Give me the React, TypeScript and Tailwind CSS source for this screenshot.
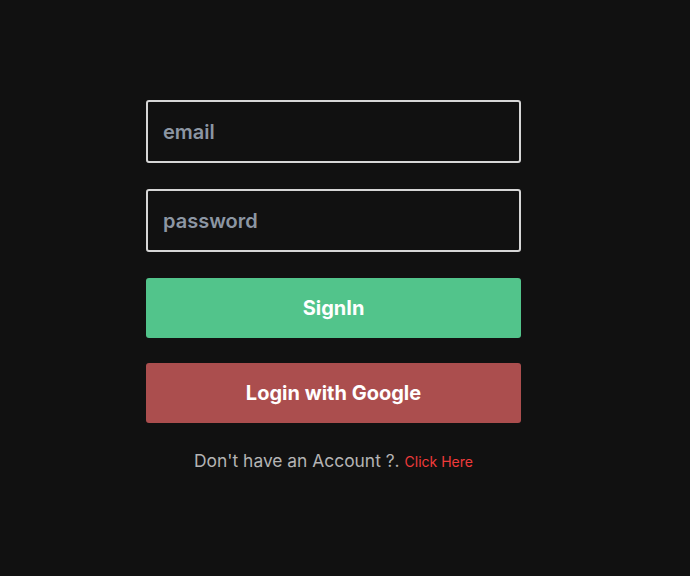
import React, { useState } from 'react';

const App: React.FC = () => {
  const [email, setEmail] = useState('');
  const [password, setPassword] = useState('');

  return (
    <div
      className="min-h-[576px] w-full bg-[#111111] pt-[100px] pl-[146px]"
      style={{ fontFamily: 'Inter, "Noto Sans", sans-serif' }}
    >
      <form className="flex w-[375px] flex-col" onSubmit={(e) => e.preventDefault()}>
        <input
          type="email"
          value={email}
          onChange={(e) => setEmail(e.target.value)}
          placeholder="email"
          className="h-[63px] w-full rounded-[3px] border-2 border-[#d6d6d6] bg-[#111111] px-[15px] text-[20px] font-semibold text-white outline-none placeholder:text-[#8c96a3]"
        />
        <input
          type="password"
          value={password}
          onChange={(e) => setPassword(e.target.value)}
          placeholder="password"
          className="mt-[26px] h-[63px] w-full rounded-[3px] border-2 border-[#d6d6d6] bg-[#111111] px-[15px] text-[20px] font-semibold text-white outline-none placeholder:text-[#8c96a3]"
        />
        <button
          type="submit"
          className="mt-[26px] h-[60px] w-full rounded-[3px] bg-[#52c48b] text-[20px] font-bold text-white"
        >
          SignIn
        </button>
        <button
          type="button"
          className="mt-[25px] h-[60px] w-full rounded-[3px] bg-[#ab4e4e] text-[20px] font-bold text-white"
        >
          Login with Google
        </button>
        <p className="mt-[25px] text-center text-[17.4px] leading-[26px] text-[#b4b4b4]">
          Don't have an Account ?.{' '}
          <a href="#" className="text-[14px] text-[#ef3b3b]">
            Click Here
          </a>
        </p>
      </form>
    </div>
  );
};

export default App;
